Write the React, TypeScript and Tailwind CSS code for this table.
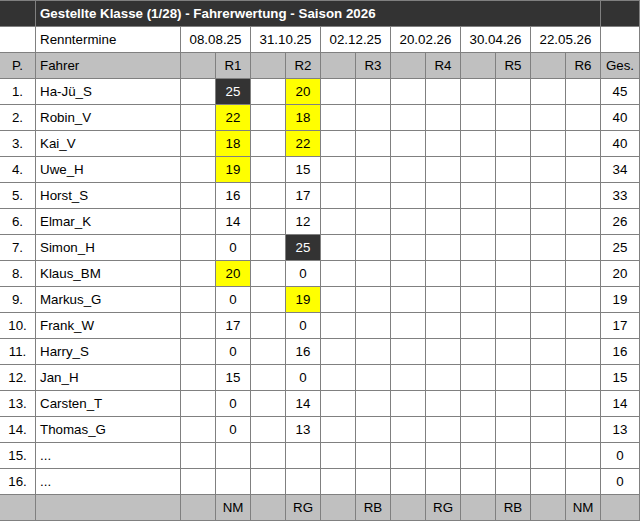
import React from "react";

type Row = { p: string; name: string; r1: string; r2: string; g: string; h1?: "d" | "y"; h2?: "d" | "y" };

const rows: Row[] = [
  { p: "1.", name: "Ha-Jü_S", r1: "25", r2: "20", g: "45", h1: "d", h2: "y" },
  { p: "2.", name: "Robin_V", r1: "22", r2: "18", g: "40", h1: "y", h2: "y" },
  { p: "3.", name: "Kai_V", r1: "18", r2: "22", g: "40", h1: "y", h2: "y" },
  { p: "4.", name: "Uwe_H", r1: "19", r2: "15", g: "34", h1: "y" },
  { p: "5.", name: "Horst_S", r1: "16", r2: "17", g: "33" },
  { p: "6.", name: "Elmar_K", r1: "14", r2: "12", g: "26" },
  { p: "7.", name: "Simon_H", r1: "0", r2: "25", g: "25", h2: "d" },
  { p: "8.", name: "Klaus_BM", r1: "20", r2: "0", g: "20", h1: "y" },
  { p: "9.", name: "Markus_G", r1: "0", r2: "19", g: "19", h2: "y" },
  { p: "10.", name: "Frank_W", r1: "17", r2: "0", g: "17" },
  { p: "11.", name: "Harry_S", r1: "0", r2: "16", g: "16" },
  { p: "12.", name: "Jan_H", r1: "15", r2: "0", g: "15" },
  { p: "13.", name: "Carsten_T", r1: "0", r2: "14", g: "14" },
  { p: "14.", name: "Thomas_G", r1: "0", r2: "13", g: "13" },
  { p: "15.", name: "...", r1: "", r2: "", g: "0" },
  { p: "16.", name: "...", r1: "", r2: "", g: "0" },
];

const dates = ["08.08.25", "31.10.25", "02.12.25", "20.02.26", "30.04.26", "22.05.26"];
const tracks = ["NM", "RG", "RB", "RG", "RB", "NM"];

function Cell({ children, cls = "" }: { children?: React.ReactNode; cls?: string }) {
  return <div className={"flex items-center justify-center h-[25px] " + cls}>{children}</div>;
}

function hl(h?: "d" | "y") {
  if (h === "d") return "bg-[#333333] text-white";
  if (h === "y") return "bg-[#ffff00]";
  return "bg-white";
}

export default function App() {
  return (
    <div className="w-[640px] h-[521px] bg-white">
      <div className="grid grid-cols-[35px_144px_repeat(12,34px)_38px] grid-rows-[repeat(20,25px)] gap-px bg-[#808080] pt-px pb-px pr-px font-['Liberation_Sans',Arial,sans-serif] text-[13.33px] text-black leading-none">
        {/* title row */}
        <Cell cls="bg-[#333333]" />
        <div className="col-span-13 flex items-center h-[25px] bg-[#333333] text-white font-bold pl-[4px]">
          Gestellte Klasse (1/28) - Fahrerwertung - Saison 2026
        </div>
        <Cell cls="bg-[#333333]" />

        {/* Renntermine row */}
        <Cell cls="bg-white" />
        <div className="flex items-center h-[25px] bg-white pl-[4px]">Renntermine</div>
        {dates.map((d) => (
          <div key={d} className="col-span-2 flex items-center justify-center h-[25px] bg-white">
            {d}
          </div>
        ))}
        <Cell cls="bg-white" />

        {/* Header row */}
        <Cell cls="bg-[#c0c0c0]">P.</Cell>
        <div className="flex items-center h-[25px] bg-[#c0c0c0] pl-[4px]">Fahrer</div>
        {["R1", "R2", "R3", "R4", "R5", "R6"].map((r) => (
          <React.Fragment key={r}>
            <Cell cls="bg-[#c0c0c0]" />
            <Cell cls="bg-[#c0c0c0]">{r}</Cell>
          </React.Fragment>
        ))}
        <Cell cls="bg-[#c0c0c0]">Ges.</Cell>

        {/* Data rows */}
        {rows.map((r) => (
          <React.Fragment key={r.p}>
            <Cell cls="bg-white">{r.p}</Cell>
            <div className="flex items-center h-[25px] bg-white pl-[4px]">{r.name}</div>
            <Cell cls="bg-white" />
            <Cell cls={hl(r.h1)}>{r.r1}</Cell>
            <Cell cls="bg-white" />
            <Cell cls={hl(r.h2)}>{r.r2}</Cell>
            {[0, 1, 2, 3, 4, 5, 6, 7].map((i) => (
              <Cell key={i} cls="bg-white" />
            ))}
            <Cell cls="bg-white">{r.g}</Cell>
          </React.Fragment>
        ))}

        {/* Footer row */}
        <Cell cls="bg-[#c0c0c0]" />
        <Cell cls="bg-[#c0c0c0]" />
        {tracks.map((t, i) => (
          <React.Fragment key={i}>
            <Cell cls="bg-[#c0c0c0]" />
            <Cell cls="bg-[#c0c0c0]">{t}</Cell>
          </React.Fragment>
        ))}
        <Cell cls="bg-[#c0c0c0]" />
      </div>
    </div>
  );
}
